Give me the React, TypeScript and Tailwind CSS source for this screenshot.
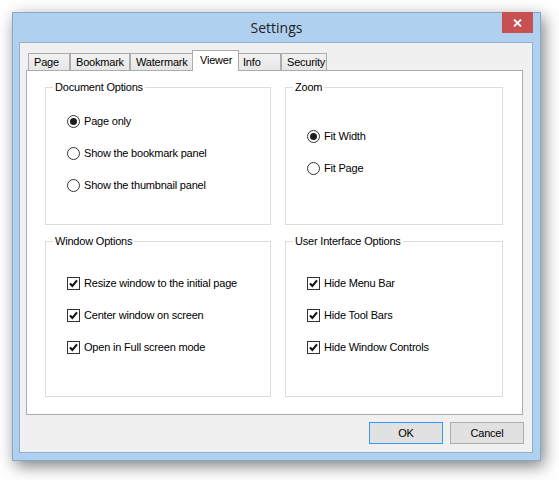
import React from "react";

type Tab = { label: string; cls: string; active?: boolean };

const tabs: Tab[] = [
  { label: "Page", cls: "w-[42px]" },
  { label: "Bookmark", cls: "w-[60px]" },
  { label: "Watermark", cls: "w-[64px]" },
  { label: "Viewer", cls: "w-[47px]", active: true },
  { label: "Info", cls: "w-[44px]" },
  { label: "Security", cls: "w-[46px]" },
];

function Radio({ checked, label }: { checked?: boolean; label: string }) {
  return (
    <label className="flex h-[16px] items-center gap-[4px]">
      <span className="flex h-[13px] w-[13px] shrink-0 items-center justify-center rounded-full border border-[#333333] bg-white">
        {checked && <span className="h-[7px] w-[7px] rounded-full bg-[#1e1e1e]" />}
      </span>
      <span>{label}</span>
    </label>
  );
}

function Check({ label }: { label: string }) {
  return (
    <label className="flex h-[16px] items-center gap-[4px]">
      <span className="flex h-[13px] w-[13px] shrink-0 items-center justify-center border border-[#333333] bg-white">
        <svg width="9" height="9" viewBox="0 0 9 9">
          <path d="M1 4.4 L3.4 6.9 L8 1.4" stroke="#111" strokeWidth="2.1" fill="none" />
        </svg>
      </span>
      <span>{label}</span>
    </label>
  );
}

function Group({ title, className, children }: { title: string; className: string; children: React.ReactNode }) {
  return (
    <fieldset className={`min-w-0 border border-[#dcdcdc] ${className}`}>
      <legend className="ml-[7px] px-[2px] leading-[13px]">{title}</legend>
      {children}
    </fieldset>
  );
}

export default function App() {
  return (
    <div className="h-[480px] w-[559px] bg-white pl-[12px] pt-[12px] font-['Liberation_Sans',Arial,sans-serif] text-[11px] tracking-[-0.2px] text-black">
      <div className="relative flex h-[449px] w-[529px] flex-col border border-[#87a8c7] bg-[#afd0ee] shadow-[3px_5px_15px_rgba(0,0,0,0.5)]">
        {/* Title bar */}
        <div className="flex h-[29px] shrink-0 items-center justify-center">
          <span className="font-['Open_Sans',sans-serif] text-[14px] tracking-normal text-[#1f1f1f]">Settings</span>
        </div>
        <button className="absolute right-[7px] top-[-1px] flex h-[21px] w-[31px] items-center justify-center bg-[#c75050]">
          <svg width="9" height="8" viewBox="0 0 9 8">
            <path d="M1 0.5 L8 7.5 M8 0.5 L1 7.5" stroke="#fff" strokeWidth="1.8" />
          </svg>
        </button>

        {/* Client area */}
        <div className="ml-[6px] flex h-[411px] w-[514px] flex-col border border-[#8fb0cf] bg-[#f0f0f0] pt-[7px]">
          {/* Tabs */}
          <div className="ml-[6px] flex h-[20px] items-end pl-[2px]">
            {tabs.map((t) =>
              t.active ? (
                <div
                  key={t.label}
                  className={`relative z-10 -mx-[2px] -mb-[1px] flex h-[21px] items-center border border-b-0 border-[#acacac] bg-white pb-[1px] pl-[7px] ${t.cls}`}
                >
                  {t.label}
                </div>
              ) : (
                <div
                  key={t.label}
                  className={`flex h-[17px] items-center border border-b-0 border-[#acacac] bg-linear-to-b from-[#f2f2f2] to-[#e6e6e6] pl-[5px] ${t.cls}`}
                >
                  {t.label}
                </div>
              )
            )}
          </div>

          {/* Panel */}
          <div className="ml-[6px] h-[345px] w-[497px] border border-[#acacac] bg-white pl-[18px] pt-[10px]">
            <div className="grid grid-cols-[226px_218px] grid-rows-[144px_162px] gap-x-[14px] gap-y-[10px]">
              <Group title="Document Options" className="h-[144px]">
                <div className="flex flex-col gap-[16px] pl-[21px] pt-[19px]">
                  <Radio checked label="Page only" />
                  <Radio label="Show the bookmark panel" />
                  <Radio label="Show the thumbnail panel" />
                </div>
              </Group>
              <Group title="Zoom" className="h-[144px]">
                <div className="flex flex-col gap-[16px] pl-[21px] pt-[34px]">
                  <Radio checked label="Fit Width" />
                  <Radio label="Fit Page" />
                </div>
              </Group>
              <Group title="Window Options" className="h-[162px]">
                <div className="flex flex-col gap-[16px] pl-[21px] pt-[27px]">
                  <Check label="Resize window to the initial page" />
                  <Check label="Center window on screen" />
                  <Check label="Open in Full screen mode" />
                </div>
              </Group>
              <Group title="User Interface Options" className="h-[162px]">
                <div className="flex flex-col gap-[16px] pl-[21px] pt-[27px]">
                  <Check label="Hide Menu Bar" />
                  <Check label="Hide Tool Bars" />
                  <Check label="Hide Window Controls" />
                </div>
              </Group>
            </div>
          </div>

          {/* Buttons */}
          <div className="mt-[7px] flex justify-end gap-[7px] pr-[8px]">
            <button className="h-[22px] w-[74px] border border-[#3399ff] bg-[#e1e1e1]">OK</button>
            <button className="h-[22px] w-[74px] border border-[#adadad] bg-[#e1e1e1]">Cancel</button>
          </div>
        </div>
      </div>
    </div>
  );
}
